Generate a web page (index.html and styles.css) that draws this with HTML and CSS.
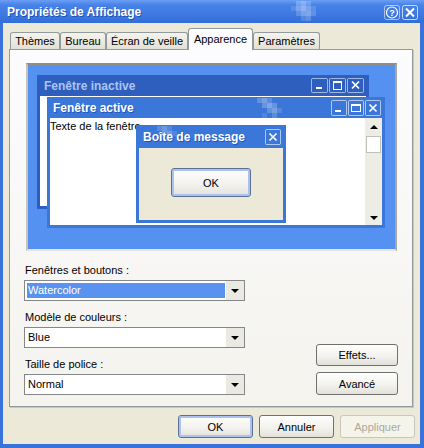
FILE: index.html
```html
<!DOCTYPE html>
<html lang="fr">
<head>
<meta charset="utf-8">
<title>Propriétés de Affichage</title>
<link rel="stylesheet" href="styles.css">
</head>
<body>
<div class="window">
  <div class="titlebar">
    <span class="title">Propriétés de Affichage</span>
    <svg class="deco deco-main" width="32" height="22" viewBox="0 0 32 22">
      <g fill="#fff">
        <rect x="6" y="1" width="5" height="5" opacity=".22"/>
        <rect x="11" y="1" width="5" height="5" opacity=".32"/>
        <rect x="16" y="1" width="5" height="5" opacity=".18"/>
        <rect x="1" y="6" width="5" height="5" opacity=".12"/>
        <rect x="6" y="6" width="5" height="5" opacity=".3"/>
        <rect x="11" y="6" width="5" height="5" opacity=".4"/>
        <rect x="16" y="6" width="5" height="5" opacity=".28"/>
        <rect x="21" y="6" width="5" height="5" opacity=".14"/>
        <rect x="6" y="11" width="5" height="5" opacity=".18"/>
        <rect x="11" y="11" width="5" height="5" opacity=".3"/>
        <rect x="16" y="11" width="5" height="5" opacity=".34"/>
        <rect x="21" y="11" width="5" height="5" opacity=".18"/>
        <rect x="11" y="16" width="5" height="5" opacity=".14"/>
        <rect x="16" y="16" width="5" height="5" opacity=".2"/>
      </g>
    </svg>
    <div class="tb-buttons">
      <svg class="tb-btn" width="16" height="15" viewBox="0 0 16 15">
        <rect x="0.5" y="0.5" width="15" height="14" rx="2" fill="none" stroke="rgba(255,255,255,.55)"/>
        <circle cx="8" cy="7.5" r="5.5" fill="none" stroke="#fff" stroke-width="1.2"/>
        <text x="8" y="11" font-family="Liberation Sans, Arial, sans-serif" font-size="9" font-weight="bold" text-anchor="middle" fill="#fff">?</text>
      </svg>
      <svg class="tb-btn" width="16" height="15" viewBox="0 0 16 15">
        <rect x="0.5" y="0.5" width="15" height="14" rx="2" fill="none" stroke="rgba(255,255,255,.7)"/>
        <path d="M4 3.5 L12 11.5 M12 3.5 L4 11.5" stroke="#fff" stroke-width="2"/>
      </svg>
    </div>
  </div>

  <div class="client">
    <div class="tabs">
      <div class="tab tab-themes">Thèmes</div>
      <div class="tab tab-bureau">Bureau</div>
      <div class="tab tab-ecran">Écran de veille</div>
      <div class="tab tab-apparence selected">Apparence</div>
      <div class="tab tab-parametres">Paramètres</div>
    </div>

    <div class="panel">
      <div class="preview">
        <div class="pwin inactive">
          <div class="ptitle">
            <span>Fenêtre inactive</span>
            <div class="pbtns">
              <svg class="pbtn" width="17" height="15" viewBox="0 0 17 15"><rect x="0.5" y="0.5" width="16" height="14" rx="1" fill="none" stroke="rgba(255,255,255,.55)"/><rect x="5" y="9" width="6" height="2" fill="#fff"/></svg>
              <svg class="pbtn" width="17" height="15" viewBox="0 0 17 15"><rect x="4.5" y="3.5" width="8" height="8" fill="none" stroke="#fff"/><rect x="4" y="3" width="9" height="2" fill="#fff"/><rect x="0.5" y="0.5" width="16" height="14" rx="1" fill="none" stroke="rgba(255,255,255,.55)"/></svg>
              <svg class="pbtn" width="17" height="15" viewBox="0 0 17 15"><rect x="0.5" y="0.5" width="16" height="14" rx="1" fill="none" stroke="rgba(255,255,255,.55)"/><path d="M5 3.5 L12 10.5 M12 3.5 L5 10.5" stroke="#fff" stroke-width="1.7"/></svg>
            </div>
          </div>
          <div class="pbody"></div>
        </div>

        <div class="pwin active">
          <div class="ptitle">
            <span>Fenêtre active</span>
            <svg class="deco deco-active" width="27" height="21" viewBox="0 0 27 21">
              <g fill="#fff">
                <rect x="0" y="1" width="5" height="5" opacity=".2"/>
                <rect x="5" y="1" width="5" height="5" opacity=".3"/>
                <rect x="10" y="1" width="5" height="5" opacity=".16"/>
                <rect x="5" y="6" width="5" height="5" opacity=".22"/>
                <rect x="10" y="6" width="5" height="5" opacity=".34"/>
                <rect x="15" y="6" width="5" height="5" opacity=".22"/>
                <rect x="10" y="11" width="5" height="5" opacity=".2"/>
                <rect x="15" y="11" width="5" height="5" opacity=".3"/>
                <rect x="20" y="11" width="5" height="5" opacity=".14"/>
                <rect x="5" y="16" width="5" height="5" opacity=".12"/>
                <rect x="15" y="16" width="5" height="5" opacity=".16"/>
              </g>
            </svg>
            <div class="pbtns">
              <svg class="pbtn" width="16" height="16" viewBox="0 0 16 16"><rect x="0.5" y="0.5" width="15" height="15" rx="1" fill="none" stroke="rgba(255,255,255,.6)"/><rect x="4" y="10" width="6" height="2" fill="#fff"/></svg>
              <svg class="pbtn" width="16" height="16" viewBox="0 0 16 16"><rect x="0.5" y="0.5" width="15" height="15" rx="1" fill="none" stroke="rgba(255,255,255,.6)"/><rect x="3.5" y="4.5" width="9" height="7" fill="none" stroke="#fff"/><rect x="3" y="4" width="10" height="2" fill="#fff"/></svg>
              <svg class="pbtn" width="16" height="16" viewBox="0 0 16 16"><rect x="0.5" y="0.5" width="15" height="15" rx="1" fill="none" stroke="rgba(255,255,255,.6)"/><path d="M4.5 4.5 L11.5 11.5 M11.5 4.5 L4.5 11.5" stroke="#fff" stroke-width="1.7"/></svg>
            </div>
          </div>
          <div class="pbody">
            <div class="ptext">Texte de la fenêtre</div>
            <div class="sb">
              <span class="arrow-up"></span>
              <span class="thumb"></span>
              <span class="sb-fill"></span>
              <span class="arrow-down"></span>
            </div>
          </div>
        </div>

        <div class="pwin msg">
          <div class="ptitle">
            <span>Boîte de message</span>
            <svg class="deco deco-msg" width="22" height="18" viewBox="0 0 22 18">
              <g fill="#fff">
                <rect x="0" y="1" width="5" height="5" opacity=".16"/>
                <rect x="5" y="1" width="5" height="5" opacity=".26"/>
                <rect x="10" y="1" width="5" height="5" opacity=".14"/>
                <rect x="5" y="6" width="5" height="5" opacity=".2"/>
                <rect x="10" y="6" width="5" height="5" opacity=".28"/>
                <rect x="15" y="6" width="5" height="5" opacity=".12"/>
                <rect x="10" y="11" width="5" height="5" opacity=".16"/>
              </g>
            </svg>
            <div class="pbtns">
              <svg class="pbtn" width="16" height="16" viewBox="0 0 16 16"><rect x="0.5" y="0.5" width="15" height="15" rx="1" fill="none" stroke="rgba(255,255,255,.6)"/><path d="M4.5 4.5 L11.5 11.5 M11.5 4.5 L4.5 11.5" stroke="#fff" stroke-width="1.7"/></svg>
            </div>
          </div>
          <div class="pbody">
            <div class="btn default pok">OK</div>
          </div>
        </div>
      </div>

      <div class="settings">
        <div class="fields">
          <div class="field">
            <label>Fenêtres et boutons :</label>
            <div class="combo"><span class="combo-value selected">Watercolor</span><span class="combo-arrow"><i class="tri"></i></span></div>
          </div>
          <div class="field">
            <label>Modèle de couleurs :</label>
            <div class="combo"><span class="combo-value">Blue</span><span class="combo-arrow"><i class="tri"></i></span></div>
          </div>
          <div class="field">
            <label>Taille de police :</label>
            <div class="combo"><span class="combo-value">Normal</span><span class="combo-arrow"><i class="tri"></i></span></div>
          </div>
        </div>
        <div class="side">
          <button class="btn side-btn">Effets...</button>
          <button class="btn side-btn tall">Avancé</button>
        </div>
      </div>
    </div>

    <div class="dlg-buttons">
      <button class="btn dlg default">OK</button>
      <button class="btn dlg">Annuler</button>
      <button class="btn dlg disabled">Appliquer</button>
    </div>
  </div>
</div>
</body>
</html>
```

FILE: styles.css
```css
* { box-sizing: border-box; }
html, body { margin: 0; padding: 0; }
body {
  width: 424px;
  height: 448px;
  overflow: hidden;
  font-family: "Liberation Sans", Arial, sans-serif;
  font-size: 11px;
  color: #000;
  background: #fff;
}

.window {
  width: 424px;
  height: 448px;
  display: flex;
  flex-direction: column;
  background: #3a72dc;
}

.titlebar {
  height: 23px;
  flex: none;
  display: flex;
  align-items: center;
  padding: 0 6px 0 7px;
  position: relative;
  background: linear-gradient(to bottom, #6c9ef4 0%, #4782e8 22%, #3c77e0 70%, #336dd8 100%);
}
.title {
  flex: 1;
  font-weight: bold;
  font-size: 12px;
  color: #fff;
  text-shadow: 1px 1px 0 #2050b0;
}
.deco { position: absolute; pointer-events: none; }
.deco-main { left: 290px; top: 0; }
.tb-buttons { display: flex; gap: 2px; margin-top: 1px; }
.tb-btn { display: block; }

.client {
  flex: 1;
  margin: 0 4px 4px 3px;
  background: #ece9d8;
  display: flex;
  flex-direction: column;
}

.tabs {
  display: flex;
  align-items: flex-end;
  height: 21px;
  margin: 5px 0 0 7px;
  position: relative;
  z-index: 1;
}
.tab {
  height: 17px;
  border: 1px solid #919b9c;
  border-bottom: none;
  border-radius: 3px 3px 0 0;
  background: linear-gradient(#f4f3ee, #e3e1d6);
  display: flex;
  align-items: center;
  justify-content: center;
  white-space: nowrap;
}
.tab.selected {
  height: 22px;
  margin-bottom: -1px;
  background: #fcfcfe;
  padding-bottom: 2px;
}
.tab-themes { width: 50px; }
.tab-bureau { width: 46px; }
.tab-ecran { width: 82px; }
.tab-apparence { width: 65px; }
.tab-parametres { width: 67px; }

.panel {
  margin-left: 6px;
  width: 404px;
  height: 358px;
  flex: none;
  border: 1px solid #919b9c;
  box-shadow: 1px 1px 0 #c9c7bb;
  background: linear-gradient(#fcfcfe, #f4f3ee);
  display: flex;
  flex-direction: column;
}

.preview {
  margin: 13px 0 0 16px;
  width: 371px;
  height: 188px;
  flex: none;
  border: 2px solid;
  border-color: #8f8d84 #a9a79d #e6e4dc #c6c4ba;
  background: #5591f0;
  position: relative;
}

.pwin {
  position: absolute;
  display: flex;
  flex-direction: column;
  padding: 0 3px 3px;
}
.pwin.inactive { left: 9px; top: 10px; width: 332px; height: 134px; background: #2e5fbf; }
.pwin.active { left: 19px; top: 32px; width: 338px; height: 131px; background: #3b76d9; }
.pwin.msg { left: 108px; top: 60px; width: 150px; height: 98px; background: #3b76d9; }

.ptitle {
  height: 21px;
  flex: none;
  display: flex;
  align-items: center;
  padding-left: 4px;
  font-weight: bold;
  font-size: 12px;
  color: #fff;
  position: relative;
  white-space: nowrap;
}
.pwin.active .ptitle { padding-left: 3px; }
.pwin.msg .ptitle { height: 23px; }
.ptitle span { position: relative; z-index: 1; }
.inactive .ptitle { color: #a9c4f3; }
.inactive .ptitle span { text-shadow: none; }
.active .ptitle span, .msg .ptitle span { text-shadow: 1px 1px 0 #2456b8; }

.pbtns { margin-left: auto; display: flex; gap: 1px; margin-right: 2px; }
.pwin.active .pbtns { margin-right: 1px; }
.pbtn { display: block; }
.deco-active { left: 207px; top: 0; }
.deco-msg { left: 18px; top: 0; }

.pbody { flex: 1; background: #fff; display: flex; }
.ptext { flex: 1; padding-top: 2px; line-height: 13px; white-space: nowrap; overflow: hidden; }
.sb {
  width: 17px;
  background: #eeede5;
  display: flex;
  flex-direction: column;
  align-items: center;
  padding: 7px 0 5px;
}
.arrow-up, .arrow-down {
  width: 0; height: 0;
  border-left: 4px solid transparent;
  border-right: 4px solid transparent;
}
.arrow-up { border-bottom: 4px solid #000; }
.arrow-down { border-top: 4px solid #000; }
.thumb {
  width: 15px;
  height: 17px;
  margin-top: 7px;
  background: #fff;
  border: 1px solid #c2c1b8;
}
.sb-fill { flex: 1; }

.pwin.msg .pbody { background: #ece9d8; justify-content: center; align-items: flex-start; }
.pok { width: 80px; height: 29px; margin-top: 20px; }

.settings {
  display: flex;
  margin: 13px 14px 0 14px;
}
.fields {
  width: 221px;
  display: flex;
  flex-direction: column;
  gap: 10px;
}
.field { display: flex; flex-direction: column; gap: 3px; }
.field label { height: 13px; line-height: 13px; padding-left: 1px; }
.combo {
  height: 21px;
  border: 1px solid #85878a;
  background: #fff;
  display: flex;
}
.combo-value {
  flex: 1;
  margin: 2px 1px 2px 2px;
  padding-left: 1px;
  line-height: 15px;
}
.combo-value.selected { background: #5a92f0; color: #fff; }
.combo-arrow {
  width: 18px;
  background: #ebeae2;
  display: flex;
  align-items: center;
  justify-content: center;
}
.tri {
  width: 0; height: 0;
  border-left: 4px solid transparent;
  border-right: 4px solid transparent;
  border-top: 4px solid #000;
}

.side {
  margin-left: auto;
  display: flex;
  flex-direction: column;
  justify-content: flex-end;
  gap: 6px;
}

.btn {
  font: 11px "Liberation Sans", Arial, sans-serif;
  color: #000;
  border: 1px solid #707070;
  border-radius: 3px;
  background: linear-gradient(#fefefd, #f3f2ee 55%, #e3e1d9);
  display: flex;
  align-items: center;
  justify-content: center;
  padding: 0;
}
.btn.default {
  border-color: #5d6f93;
  box-shadow: inset 0 0 0 2px #a9c3ee;
}
.btn.disabled {
  border-color: #c9c7ba;
  color: #aca899;
  background: #f5f4ea;
}
.side-btn { width: 82px; height: 22px; }
.side-btn.tall { height: 23px; }

.dlg-buttons {
  display: flex;
  justify-content: flex-end;
  gap: 6px;
  margin: 8px 5px 0 0;
}
.dlg { width: 75px; height: 23px; }
```
